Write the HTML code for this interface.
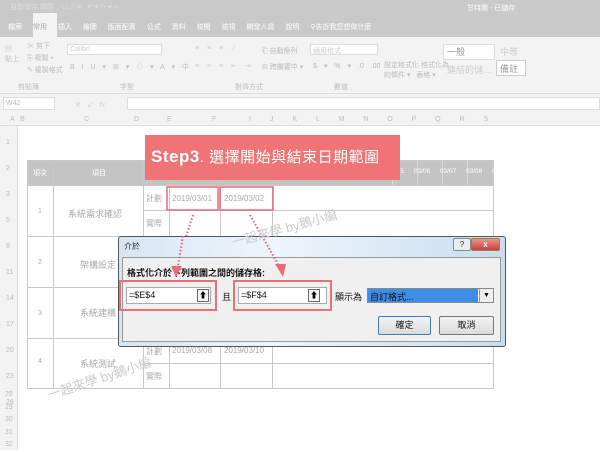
<!DOCTYPE html>
<html><head><meta charset="utf-8"><style>
*{margin:0;padding:0;box-sizing:border-box}
body{width:600px;height:450px;overflow:hidden;background:#fff;font-family:"Liberation Sans","Noto Sans CJK TC",sans-serif;position:relative;font-size:7px;color:#aaa}
.a{position:absolute}
.t{white-space:nowrap}
</style></head><body>
<div class="a" style="left:0;top:0;width:600px;height:37px;background:#c9c9c9"></div>
<div class="a t" style="left:10px;top:2px;color:#ddd;font-size:7px">自動儲存 關閉 &nbsp;&nbsp; ▭ ▯ ▣ &nbsp;↶ ▾ ↷ ▾ ≡</div>
<div class="a t" style="left:467px;top:3px;color:#fff;font-size:7px">甘特圖 - 已儲存</div>
<div class="a" style="left:33px;top:13px;width:24px;height:24px;background:#f3f3f3"></div>
<div class="a t" style="left:8px;top:22px;color:#fff;font-size:7px;word-spacing:9px">檔案 <span style="color:#aaa">常用</span> 插入 繪圖 版面配置 公式 資料 校閱 檢視 開發人員 說明 ⚲告訴我您想做什麼</div>
<div class="a" style="left:0;top:37px;width:600px;height:57px;background:#f3f3f3;border-bottom:1px solid #ddd"></div>
<div class="a t" style="left:5px;top:45px;color:#bbb;line-height:10px">▤<br>貼上</div>
<div class="a t" style="left:27px;top:41px;color:#bbb;line-height:12px">✂ 剪下<br>⎘ 複製 ▾<br>✎ 複製格式</div>
<div class="a t" style="left:18px;top:82px;color:#bbb">剪貼簿</div>
<div class="a" style="left:67px;top:44px;width:95px;height:11px;background:#fff;border:1px solid #ddd"></div>
<div class="a t" style="left:70px;top:46px;color:#ccc">Calibri</div>
<div class="a t" style="left:70px;top:62px;color:#bbb;word-spacing:5px">B I U ▾ ⊞ ▾ ◇ ▾ A ▾ 中</div>
<div class="a t" style="left:120px;top:82px;color:#bbb">字型</div>
<div class="a t" style="left:195px;top:45px;color:#ccc;word-spacing:6px">≡ ≡ ≡ ⟋</div>
<div class="a t" style="left:195px;top:62px;color:#ccc;word-spacing:6px">≡ ≡ ≡ ⇤ ⇥</div>
<div class="a t" style="left:262px;top:46px;color:#bbb">⎗ 自動換列</div>
<div class="a t" style="left:262px;top:62px;color:#bbb">⊟ 跨欄置中 ▾</div>
<div class="a t" style="left:235px;top:82px;color:#bbb">對齊方式</div>
<div class="a" style="left:310px;top:44px;width:68px;height:11px;background:#fff;border:1px solid #ddd"></div>
<div class="a t" style="left:313px;top:46px;color:#ccc">通用格式</div>
<div class="a t" style="left:313px;top:62px;color:#bbb;word-spacing:5px">$ ▾ % ▾ .0 .00</div>
<div class="a t" style="left:334px;top:82px;color:#bbb">數值</div>
<div class="a t" style="left:384px;top:61px;color:#bbb;line-height:10px">設定格式化 格式化為<br>的條件 ▾ &nbsp; 表格 ▾</div>
<div class="a" style="left:443px;top:44px;width:52px;height:16px;background:#fff;border:1px solid #ddd"></div>
<div class="a t" style="left:447px;top:45px;color:#999;font-size:9px">一般</div>
<div class="a t" style="left:447px;top:63px;color:#ccc;font-size:9px">連結的儲...</div>
<div class="a t" style="left:500px;top:45px;color:#ccc;font-size:9px">中等</div>
<div class="a" style="left:496px;top:60px;width:30px;height:16px;background:#fff;border:1px solid #ccc"></div>
<div class="a t" style="left:500px;top:62px;color:#999;font-size:9px">備註</div>
<div class="a" style="left:0;top:94px;width:600px;height:18px;background:#f3f3f3"></div>
<div class="a" style="left:3px;top:97px;width:52px;height:13px;background:#fff;border:1px solid #ddd"></div>
<div class="a t" style="left:6px;top:100px;color:#bbb">W42</div>
<div class="a t" style="left:75px;top:100px;color:#ccc;word-spacing:5px">✕ ✓ fx</div>
<div class="a" style="left:127px;top:97px;width:473px;height:13px;background:#fff;border:1px solid #ddd"></div>
<div class="a" style="left:0;top:112px;width:600px;height:14px;background:#f3f3f3;border-bottom:1px solid #ddd"></div>
<div class="a t" style="left:10px;top:116px;color:#bbb">A &nbsp; B</div>
<div class="a t" style="left:84px;top:116px;color:#bbb">C</div>
<div class="a t" style="left:134px;top:116px;color:#bbb">D</div>
<div class="a t" style="left:167px;top:116px;color:#bbb">E</div>
<div class="a t" style="left:212px;top:116px;color:#bbb">F</div>
<div class="a t" style="left:249px;top:116px;color:#bbb;word-spacing:17px">I J K L M N O P Q R S</div>
<div class="a" style="left:0;top:126px;width:18px;height:324px;background:#f3f3f3;border-right:1px solid #ddd"></div>
<div class="a t" style="left:6px;top:130px;color:#bbb;line-height:26px">1<br>2<br>3<br>5<br>8<br>11<br>14<br>17<br>20<br>23<br>26</div>
<div class="a t" style="left:5px;top:389px;color:#bbb;line-height:12.5px">28<br>29<br>30<br>31<br>32</div>
<svg class="a" style="left:0;top:0" width="600" height="450">
<rect x="27" y="160" width="466" height="25" fill="#c4c4c4"/>
<g stroke="#c8c8c8" stroke-width="1" fill="none">
<rect x="27.5" y="160.5" width="466" height="228"/>
<line x1="27" y1="185.5" x2="493" y2="185.5"/>
<line x1="27" y1="236.5" x2="493" y2="236.5"/>
<line x1="27" y1="287.5" x2="493" y2="287.5"/>
<line x1="27" y1="338.5" x2="493" y2="338.5"/>
<line x1="143" y1="210.5" x2="493" y2="210.5"/>
<line x1="143" y1="261.5" x2="493" y2="261.5"/>
<line x1="143" y1="312.5" x2="493" y2="312.5"/>
<line x1="143" y1="363.5" x2="493" y2="363.5"/>
<line x1="53.5" y1="160" x2="53.5" y2="389"/>
<line x1="143.5" y1="160" x2="143.5" y2="389"/>
<line x1="169.5" y1="160" x2="169.5" y2="389"/>
<line x1="220.5" y1="160" x2="220.5" y2="389"/>
<line x1="272.5" y1="160" x2="272.5" y2="389"/>
</g>
<g stroke="#d8d8d8"><line x1="392.5" y1="160" x2="392.5" y2="185"/><line x1="417.5" y1="160" x2="417.5" y2="185"/><line x1="442.5" y1="160" x2="442.5" y2="185"/><line x1="467.5" y1="160" x2="467.5" y2="185"/></g>
<rect x="167" y="187" width="51" height="23" fill="none" stroke="#e86a74" stroke-width="1.5"/>
<rect x="220" y="187" width="53" height="23" fill="none" stroke="#e86a74" stroke-width="1.5"/>
<line x1="193" y1="215" x2="176" y2="268" stroke="#e0607a" stroke-width="2" stroke-dasharray="1.5,2"/>
<line x1="250" y1="215" x2="281" y2="269" stroke="#e0607a" stroke-width="2" stroke-dasharray="1.5,2"/>
</svg>
<div class="a t" style="left:33px;top:168px;color:#fff">項次</div>
<div class="a t" style="left:92px;top:168px;color:#fff">項目</div>
<div class="a t" style="left:395px;top:168px;color:#fff;font-size:6.5px;word-spacing:8px">/05 03/06 03/07 03/08 03/09 03/10</div>
<div class="a t" style="left:38px;top:208px;color:#aaa">1</div>
<div class="a t" style="left:38px;top:259px;color:#aaa">2</div>
<div class="a t" style="left:38px;top:310px;color:#aaa">3</div>
<div class="a t" style="left:38px;top:358px;color:#aaa">4</div>
<div class="a t" style="left:68px;top:207px;color:#aaa;font-size:9px">系統需求確認</div>
<div class="a t" style="left:80px;top:258px;color:#aaa;font-size:9px">架構設定</div>
<div class="a t" style="left:80px;top:306px;color:#aaa;font-size:9px">系統建構</div>
<div class="a t" style="left:80px;top:357px;color:#aaa;font-size:9px">系統測試</div>
<div class="a t" style="left:146px;top:193px;color:#aaa;font-size:8px">計劃</div>
<div class="a t" style="left:146px;top:218px;color:#aaa;font-size:8px">實際</div>
<div class="a t" style="left:146px;top:346px;color:#aaa;font-size:8px">計劃</div>
<div class="a t" style="left:146px;top:371px;color:#aaa;font-size:8px">實際</div>
<div class="a t" style="left:172px;top:194px;color:#aaa;font-size:8px">2019/03/01</div>
<div class="a t" style="left:224px;top:194px;color:#aaa;font-size:8px">2019/03/02</div>
<div class="a t" style="left:172px;top:346px;color:#aaa;font-size:8px">2019/03/08</div>
<div class="a t" style="left:224px;top:346px;color:#aaa;font-size:8px">2019/03/10</div>
<div class="a" style="left:145px;top:135px;width:255px;height:45px;background:#f07476"></div>
<div class="a t" style="left:151px;top:146px;color:#fff;font-size:17px;font-weight:bold;letter-spacing:0.5px">Step3<span style="font-weight:normal;font-size:15px">. 選擇開始與結束日期範圍</span></div>
<div class="a" style="left:118px;top:236px;width:388px;height:111px;background:linear-gradient(90deg,#d6e5f3,#eef5fb 40%,#c9ddef);border:1px solid #555;border-radius:3px"></div>
<div class="a t" style="left:124px;top:241px;color:#222;font-size:8px">介於</div>
<div class="a" style="left:453px;top:238px;width:18px;height:13px;background:#e9eef3;border:1px solid #888;border-radius:2px;font-size:8px;color:#333;text-align:center;line-height:11px">?</div>
<div class="a" style="left:471px;top:238px;width:29px;height:13px;background:linear-gradient(#e9938a,#c8423a);border:1px solid #884;border-radius:2px;font-size:8px;color:#fff;text-align:center;line-height:11px;font-weight:bold">x</div>
<div class="a" style="left:122px;top:257px;width:379px;height:85px;background:#f0f0f0;border:1px solid #999"></div>
<div class="a t" style="left:127px;top:266px;color:#111;font-size:9px;font-weight:bold">格式化介於下列範圍之間的儲存格:</div>
<div class="a" style="left:119px;top:280px;width:98px;height:31px;border:2px solid #e8707a"></div>
<div class="a" style="left:126px;top:287px;width:85px;height:17px;background:#fff;border:1px solid #aaa"></div>
<div class="a t" style="left:129px;top:290px;color:#111;font-size:9px">=$E$4</div>
<div class="a" style="left:197px;top:289px;width:12px;height:13px;border:1px solid #666;background:#f4f4f4;font-size:8px;color:#000;text-align:center;line-height:11px">⬆</div>
<div class="a t" style="left:222px;top:290px;color:#111;font-size:9px">且</div>
<div class="a" style="left:233px;top:280px;width:99px;height:31px;border:2px solid #e8707a"></div>
<div class="a" style="left:238px;top:287px;width:89px;height:17px;background:#fff;border:1px solid #aaa"></div>
<div class="a t" style="left:241px;top:290px;color:#111;font-size:9px">=$F$4</div>
<div class="a" style="left:308px;top:289px;width:12px;height:13px;border:1px solid #666;background:#f4f4f4;font-size:8px;color:#000;text-align:center;line-height:11px">⬆</div>
<div class="a t" style="left:335px;top:290px;color:#111;font-size:9px">顯示為</div>
<div class="a" style="left:367px;top:288px;width:127px;height:15px;background:#fff;border:1px solid #888"></div>
<div class="a" style="left:368px;top:289px;width:110px;height:13px;background:#3d8ee8"></div>
<div class="a t" style="left:370px;top:290px;color:#111;font-size:9px">自訂格式...</div>
<div class="a" style="left:479px;top:289px;width:14px;height:13px;background:#eee;border-left:1px solid #999;font-size:7px;color:#000;text-align:center;line-height:13px">▼</div>
<div class="a" style="left:378px;top:316px;width:53px;height:19px;background:linear-gradient(#f2f2f2,#dcdcdc);border:1px solid #3c7fb1;border-radius:2px;font-size:9px;color:#111;text-align:center;line-height:17px">確定</div>
<div class="a" style="left:439px;top:316px;width:55px;height:19px;background:linear-gradient(#f2f2f2,#dcdcdc);border:1px solid #777;border-radius:2px;font-size:9px;color:#111;text-align:center;line-height:17px">取消</div>
<svg class="a" style="left:0;top:0" width="600" height="450">
<line x1="183" y1="236" x2="178" y2="266" stroke="#e0607a" stroke-width="2" stroke-dasharray="1.5,2"/>
<line x1="262" y1="236" x2="278" y2="264" stroke="#e0607a" stroke-width="2" stroke-dasharray="1.5,2"/>
<polygon points="171,266 182,266 176,277" fill="#ea6a7c"/>
<polygon points="275,264 286,264 283,277" fill="#ea6a7c"/>
</svg>
<div class="a t" style="left:230px;top:218px;color:#ccc;font-size:13px;transform:rotate(-15deg)">一起來學 by鵝小編</div>
<div class="a t" style="left:45px;top:368px;color:#ccc;font-size:13px;transform:rotate(-18deg)">一起來學 by鵝小編</div>
</body></html>
